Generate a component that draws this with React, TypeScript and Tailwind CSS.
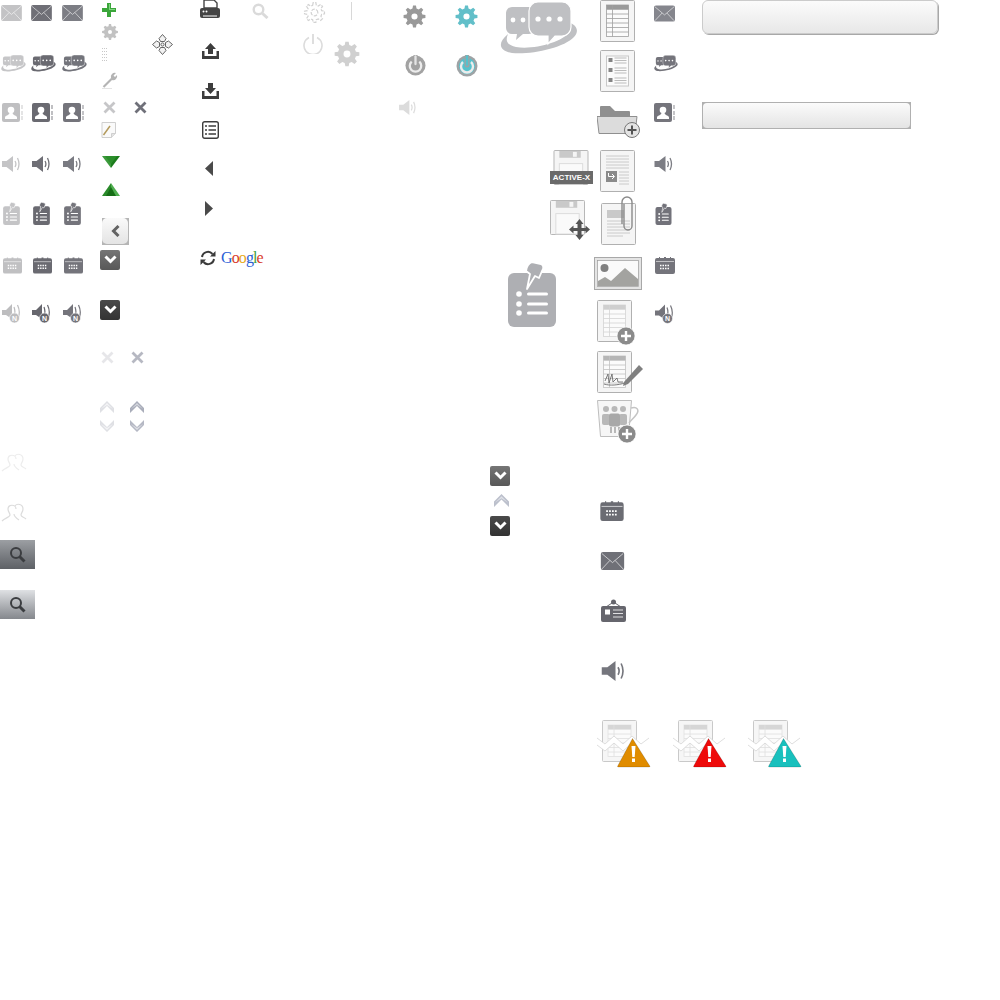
import React from 'react';

type IconProps = { className: string; color?: string; accent?: string };

// gear outline with a round hole, used by all the cog icons
const gearPath = (c: number, ro: number, ri: number, hole: number, teeth = 8) => {
  let d = '';
  const step = (Math.PI * 2) / teeth;
  for (let i = 0; i < teeth; i++) {
    const a = i * step - Math.PI / 2;
    const pts: [number, number][] = [
      [ri, a - step * 0.32],
      [ro, a - step * 0.17],
      [ro, a + step * 0.17],
      [ri, a + step * 0.32],
    ];
    pts.forEach(([r, t], j) => {
      const x = (c + r * Math.cos(t)).toFixed(2);
      const y = (c + r * Math.sin(t)).toFixed(2);
      d += `${i === 0 && j === 0 ? 'M' : 'L'}${x} ${y} `;
    });
  }
  d += 'Z ';
  d += `M${c + hole} ${c} A${hole} ${hole} 0 1 0 ${c - hole} ${c} A${hole} ${hole} 0 1 0 ${c + hole} ${c} Z`;
  return d;
};

function Mail({ className, color = '#6e6e75' }: IconProps) {
  return (
    <svg className={className} viewBox="0 0 22 17">
      <rect width="22" height="17" rx="2" fill={color} />
      <path d="M1 1.5 11 10 21 1.5M1 16l7.5-8M21 16l-7.5-8" fill="none" stroke="#fff" strokeOpacity=".65" strokeWidth=".9" />
    </svg>
  );
}

function Chat({ className, color = '#6e6e75' }: IconProps) {
  return (
    <svg className={className} viewBox="0 0 78 53">
      <path d="M68 20C78 23 79 30 74 35 64 46 30 53 12 51-1 49-3 41 8 32 5 39 7 43 16 45 34 48 62 40 70 30Z" fill={color} />
      <path d="M12 5h17a6 6 0 0 1 6 6v15a6 6 0 0 1-6 6H23l-7 6 1-6h-5a6 6 0 0 1-6-6V11a6 6 0 0 1 6-6Z" fill={color} />
      <path d="M38 0h24a9 9 0 0 1 9 9v16a9 9 0 0 1-9 9h-7l-7 8 0-8H38a9 9 0 0 1-9-9V9a9 9 0 0 1 9-9Z" fill={color} stroke="#fff" strokeWidth="1.2" />
      <g fill="#fff">
        <circle cx="13" cy="18" r="2.4" />
        <circle cx="23" cy="18" r="2.4" />
        <circle cx="38" cy="17" r="2.6" />
        <circle cx="49" cy="17" r="2.6" />
        <circle cx="60" cy="17" r="2.6" />
      </g>
    </svg>
  );
}

function Contact({ className, color = '#6e6e75' }: IconProps) {
  return (
    <svg className={className} viewBox="0 0 21 19">
      <rect width="18" height="19" rx="2" fill={color} />
      <circle cx="9" cy="7" r="3.3" fill="#fff" />
      <path d="M3 16v-1.5C3 12.5 7 12.5 7.5 10h3c.5 2.5 4.5 2.5 4.5 4.5V16Z" fill="#fff" />
      <path d="M20 2v4M20 8v4M20 13v4" stroke={color} strokeOpacity=".7" strokeWidth="1.2" />
    </svg>
  );
}

function Speaker({ className, color = '#6e6e75' }: IconProps) {
  return (
    <svg className={className} viewBox="0 0 18 16">
      <path d="M0 5h4.5L11 0v16L4.5 11H0Z" fill={color} />
      <path d="M13 5q1.8 3 0 6M15.5 2q3 6 0 12" fill="none" stroke={color} strokeWidth="1.3" />
    </svg>
  );
}

function SpeakerN({ className, color = '#6e6e75' }: IconProps) {
  return (
    <svg className={className} viewBox="0 0 19 19">
      <path d="M0 6h4L10 0v15L4 11H0Z" fill={color} />
      <path d="M12 3q1.5 4 .5 7M15.5 1q3 6 1 12" fill="none" stroke={color} strokeWidth="1.2" />
      <circle cx="12.5" cy="14" r="5" fill={color} stroke="#fff" strokeWidth=".6" />
      <text x="12.5" y="16.6" textAnchor="middle" fontSize="7" fontWeight="700" fontFamily="Liberation Sans, sans-serif" fill="#fff">
        N
      </text>
    </svg>
  );
}

function Clipboard({ className, color = '#6e6e75' }: IconProps) {
  return (
    <svg className={className} viewBox="0 0 48 66">
      <rect y="12" width="48" height="54" rx="6" fill={color} />
      <path d="M24 1 33 3Q37 5 34 10L31 17 27 15 19 28 22 13 18 10Q19 3 24 1Z" fill={color} stroke="#fff" strokeWidth="1.8" strokeLinejoin="round" />
      <g fill="#fff">
        <circle cx="11" cy="33" r="2.8" />
        <circle cx="11" cy="43" r="2.8" />
        <circle cx="11" cy="52" r="2.8" />
        <rect x="19" y="31.5" width="21" height="3" rx="1.5" />
        <rect x="19" y="41.5" width="21" height="3" rx="1.5" />
        <rect x="19" y="50.5" width="21" height="3" rx="1.5" />
      </g>
    </svg>
  );
}

function Calendar({ className, color = '#6e6e75' }: IconProps) {
  return (
    <svg className={className} viewBox="0 0 20 18">
      <path d="M4 1h1v1h4V1h2v1h4V1h1v1h2a2 2 0 0 1 2 2v12a2 2 0 0 1-2 2H2a2 2 0 0 1-2-2V4a2 2 0 0 1 2-2h2Z" fill={color} />
      <path d="M1 5.5h18" stroke="#fff" strokeOpacity=".7" strokeWidth=".8" />
      <path d="M5 9.5h10M5 12.5h10" stroke="#fff" strokeWidth="1.6" strokeDasharray="1.5 1" />
    </svg>
  );
}

function Gear({ className, color = '#9b9b9b' }: IconProps) {
  return (
    <svg className={className} viewBox="0 0 24 24">
      <path d={gearPath(12, 11.5, 8.5, 3.2)} fill={color} fillRule="evenodd" />
    </svg>
  );
}

function Power({ className, color = '#a6a6a6', accent = '#a6a6a6' }: IconProps) {
  return (
    <svg className={className} viewBox="0 0 22 22">
      <circle cx="11" cy="11" r="10.5" fill={color} />
      <circle cx="11" cy="11" r="8" fill={accent} />
      <path d="M7 7a6 6 0 1 0 8 0" fill="none" stroke="#ececec" strokeWidth="2.4" />
      <path d="M11 2v8" stroke={color} strokeWidth="5" strokeLinecap="round" />
      <path d="M11 1.5v8" stroke={accent === color ? '#e4e4e4' : accent} strokeWidth="2.4" strokeLinecap="round" />
    </svg>
  );
}

function Cross({ className, color = '#c9c9cc' }: IconProps) {
  return (
    <svg className={className} viewBox="0 0 13 13">
      <path d="M1.5 1.5l10 10M11.5 1.5l-10 10" stroke={color} strokeWidth="2.8" />
    </svg>
  );
}

function ChevronPale({ className, color = '#dfe0e4', accent = '#f4f4f6' }: IconProps) {
  return (
    <svg className={className} viewBox="0 0 14 12">
      <path d="M7 0l7 7v5L7 5 0 12V7Z" fill={color} />
      <path d="M7 2l6 6-6-4-6 4Z" fill={accent} />
    </svg>
  );
}

function ChevronBox({ className }: { className: string }) {
  return (
    <div className={`flex h-5 w-5 items-center justify-center rounded-[2px] ${className}`}>
      <svg className="h-[10px] w-[13px]" viewBox="0 0 13 10">
        <path d="M1.5 1.5l5 5 5-5" fill="none" stroke="#fff" strokeWidth="3" />
      </svg>
    </div>
  );
}

function PlusBadge({ cx, cy, r = 9 }: { cx: number; cy: number; r?: number }) {
  return (
    <g>
      <circle cx={cx} cy={cy} r={r} fill="#8b8b8b" stroke="#fff" strokeWidth=".7" />
      <path d={`M${cx - 5} ${cy}h10M${cx} ${cy - 5}v10`} stroke="#fff" strokeWidth="2.4" />
    </g>
  );
}

// small spreadsheet drawn on the paper icons
function MiniTable({ x, y, w, rows, head = '#c4c4c4', line = '#d4d4d4' }: { x: number; y: number; w: number; rows: number; head?: string; line?: string }) {
  const h = rows * 4.5;
  return (
    <g>
      <rect x={x} y={y} width={w} height={h} fill="#fbfbfb" stroke={line} strokeWidth=".8" />
      <rect x={x} y={y} width={w} height="4" fill={head} />
      {Array.from({ length: rows - 1 }, (_, i) => (
        <path key={i} d={`M${x} ${y + 4.5 * (i + 1)}h${w}`} stroke={line} strokeWidth=".8" />
      ))}
      <path d={`M${x + 6} ${y}v${h}`} stroke={line} strokeWidth=".8" />
    </g>
  );
}

function Lines({ x, w, ys, color = '#c6c6c6', width = 0.9 }: { x: number; w: number; ys: number[]; color?: string; width?: number }) {
  return (
    <g>
      {ys.map((y) => (
        <path key={y} d={`M${x} ${y}h${w}`} stroke={color} strokeWidth={width} />
      ))}
    </g>
  );
}

function Paper({ w, h }: { w: number; h: number }) {
  return <rect x=".5" y=".5" width={w - 1} height={h - 1} rx="1" fill="#f5f5f5" stroke="#b0b0b0" />;
}

function Floppy({ className }: { className: string }) {
  return (
    <svg className={className} viewBox="0 0 36 36">
      <path d="M1.5.5h33a1 1 0 0 1 1 1v33a1 1 0 0 1-1 1h-33a1 1 0 0 1-1-1v-33a1 1 0 0 1 1-1Z" fill="#f5f5f5" stroke="#b5b5b5" />
      <rect x="6" y="1" width="22" height="7" fill="#c9c9c9" />
      <rect x="20" y="2" width="4" height="5" fill="#f5f5f5" />
      <rect x="6" y="14" width="24" height="21" fill="#fafafa" stroke="#dcdcdc" />
    </svg>
  );
}

function People({ stroke }: { stroke: string }) {
  return (
    <svg className="ml-[1px] h-[21px] w-[26px]" viewBox="0 0 26 21">
      <path d="M15 6C15 1 7 1 7 6 7 9 9 10 9 12 9 14 4 15 1 18M13 11C13 13 15 15 18 17" fill="none" stroke={stroke} strokeWidth="1.2" />
      <path d="M14 3C16 0 22 1 22 6 22 9 20 10 20 12 20 14 23 14 25 16" fill="none" stroke={stroke} strokeWidth="1.2" />
    </svg>
  );
}

function SearchButton({ className }: { className: string }) {
  return (
    <div className={`flex h-[29px] w-[35px] items-center justify-center bg-gradient-to-b ${className}`}>
      <svg className="h-[17px] w-[17px]" viewBox="0 0 17 17">
        <circle cx="7" cy="7" r="5" fill="none" stroke="#3b3d40" strokeWidth="2" />
        <path d="M10.5 10.5l5 5" stroke="#3b3d40" strokeWidth="3" />
      </svg>
    </div>
  );
}

function WarningDoc({ className, color }: { className: string; color: string }) {
  return (
    <svg className={className} viewBox="0 0 54 48">
      <rect x="5.5" y=".5" width="34" height="41" rx="1" fill="#f6f6f6" stroke="#c9c9c9" />
      <MiniTable x={11} y={5} w={23} rows={7} head="#d6d6d6" line="#e0e0e0" />
      <path d="M0 18l8 6 9-8 9 8 9-8 9 8 8-6v7l-8 6-9-8-9 8-9-8-9 8-8-6Z" fill="#fff" />
      <path d="M0 18l8 6 9-8 9 8 9-8 9 8 8-6M0 25l8 6 9-8 9 8 9-8" fill="none" stroke="#d5d5d5" strokeWidth=".8" />
      <path d="M35.5 18.5 52.8 46a.6.6 0 0 1-.5 1H21.200a.6.6 0 0 1-.5-1Z" fill={color} stroke="#00000030" strokeWidth=".8" />
      <path d="M34.5 26h4l-.8 11h-2.400Z" fill="#fff" />
      <rect x="35" y="38.5" width="3" height="3.5" fill="#fff" />
    </svg>
  );
}

// the three-state icons at the top left, one row per icon
const stateRows = [
  { Icon: Mail, cls: 'ml-[1px] h-[16px] w-[21px]', colors: ['#c3c3c5', '#6f6f76', '#7c7d84'] },
  { Icon: Chat, cls: 'ml-[1px] h-[17px] w-[25px]', colors: ['#c6c6c8', '#6a6a71', '#73747b'] },
  { Icon: Contact, cls: 'ml-[2px] h-[19px] w-[21px]', colors: ['#bfbfc1', '#6a6a71', '#74747b'] },
  { Icon: Speaker, cls: 'ml-[2px] h-[16px] w-[18px]', colors: ['#c4c4c6', '#6f6f76', '#7a7b82'] },
  { Icon: Clipboard, cls: 'ml-[3px] h-[23px] w-[17px]', colors: ['#c4c4c6', '#6a6a71', '#74747b'] },
  { Icon: Calendar, cls: 'ml-[3px] h-[18px] w-[19px]', colors: ['#c0c0c2', '#6a6a71', '#74747b'] },
  { Icon: SpeakerN, cls: 'ml-[2px] h-[19px] w-[19px]', colors: ['#bdbdbf', '#66666d', '#74747b'] },
];

export default function App() {
  return (
    <div className="relative h-[1000px] w-[1000px] overflow-hidden bg-white font-['Liberation_Sans',sans-serif]">
      {/* first sprite columns, three states per icon */}
      <div className="absolute left-0 top-[5px] grid grid-cols-[30px_31px_31px] grid-rows-[50px_48px_53px_46px_54px_48px_auto] items-start">
        {stateRows.map(({ Icon, cls, colors }) =>
          colors.map((c) => <Icon key={`${cls}${c}`} className={cls} color={c} />),
        )}
      </div>

      {/* small tool icons */}
      <div className="absolute left-[100px] top-[3px] grid grid-rows-[21px_24px_24px_29px_21px_34px_27px_35px_32px_50px_51px_50px_19px_auto] items-start">
        <svg className="ml-[2px] h-[14px] w-[14px]" viewBox="0 0 14 14">
          <path d="M5 0h4v5h5v4H9v5H5V9H0V5h5Z" fill="#3ba63b" />
          <path d="M6 1h2v5h5v1H7V1Z" fill="#7fd67f" />
        </svg>
        <svg className="ml-[2px] h-[16px] w-[16px]" viewBox="0 0 24 24">
          <path d={gearPath(12, 12, 9, 3)} fill="#c2c2c2" fillRule="evenodd" />
        </svg>
        <svg className="ml-[2px] h-[15px] w-[6px]" viewBox="0 0 6 15">
          {[0, 1, 2, 3, 4].map((r) =>
            [0, 2, 4].map((c) => <rect key={`${r}-${c}`} x={c} y={r * 3} width="1" height="1" fill="#c8c8c8" />),
          )}
        </svg>
        <svg className="ml-[2px] h-[17px] w-[16px]" viewBox="0 0 16 17">
          <path d="M1.5 15 10 6.5" stroke="#b4b4b4" strokeWidth="2.2" />
          <path d="M9 6a4 4 0 0 1 5-5l-2.500 2.500L13 5l2-2a4 4 0 0 1-5 5Z" fill="#b4b4b4" />
          <path d="M0 16.5h10" stroke="#e4e4e4" />
        </svg>
        <div className="flex">
          <Cross className="ml-[3px] h-[13px] w-[13px]" color="#c6c6c8" />
          <Cross className="ml-[18px] h-[13px] w-[13px]" color="#6f7079" />
        </div>
        <svg className="ml-[1px] h-[16px] w-[15px]" viewBox="0 0 15 16">
          <path d="M1 .5h13.5v11L10.5 15.500H1Z" fill="#fafafa" stroke="#cfcfcf" />
          <path d="M10.5 15.5v-4h4" fill="#e4e4e4" stroke="#cfcfcf" />
          <path d="M2.5 13 9 4" stroke="#b39a5c" strokeWidth="1.5" />
        </svg>
        <svg className="ml-[2px] h-[12px] w-[18px]" viewBox="0 0 18 12">
          <path d="M0 0h9v12Z" fill="#3c9a3c" />
          <path d="M18 0H9v12Z" fill="#1c7c1c" />
          <path d="M3 0h12l-6 8Z" fill="#2b8e2b" />
        </svg>
        <svg className="ml-[2px] h-[13px] w-[18px]" viewBox="0 0 18 13">
          <path d="M0 13h9V0Z" fill="#2a8a2a" />
          <path d="M18 13H9V0Z" fill="#4fae4f" />
          <path d="M4 13h10L9 4Z" fill="#166e16" />
        </svg>
        {/* back button and dark chevron boxes */}
        <div className="ml-[2px] h-[27px] w-[27px] bg-[#b5b5b5]">
          <div className="flex h-[26px] w-[26px] items-center justify-center rounded-[5px] bg-gradient-to-b from-[#fafafa] to-[#e4e4e4]">
            <svg className="h-[12px] w-[9px]" viewBox="0 0 9 12">
              <path d="M7.5 1 2.5 6l5 5" fill="none" stroke="#636363" strokeWidth="3" />
            </svg>
          </div>
        </div>
        <ChevronBox className="bg-gradient-to-b from-[#757575] to-[#585858]" />
        <ChevronBox className="bg-gradient-to-b from-[#4a4a4a] to-[#333333]" />
        <div className="flex gap-[17px] pl-[1px]">
          <Cross className="h-[13px] w-[13px]" color="#e6e6e9" />
          <Cross className="h-[13px] w-[13px]" color="#b6b8c2" />
        </div>
        <div className="flex gap-4">
          <ChevronPale className="h-[12px] w-[14px]" />
          <ChevronPale className="h-[12px] w-[14px]" color="#a9adba" accent="#d5d7de" />
        </div>
        <div className="flex gap-4">
          <ChevronPale className="h-[12px] w-[14px] rotate-180" />
          <ChevronPale className="h-[12px] w-[14px] rotate-180" color="#b5b8c4" accent="#dfe0e6" />
        </div>
      </div>

      {/* move cross */}
      <svg className="absolute left-[152px] top-[34px] h-[21px] w-[21px]" viewBox="0 0 21 21">
        <g fill="#f2f2f2" stroke="#555" strokeWidth=".9">
          <path d="M10.5.5l3.5 4-1.500 3h-4l-1.500-3Z" />
          <path d="M10.5 20.5l3.5-4-1.500-3h-4l-1.500 3Z" />
          <path d="M.5 10.5l4-3.500 3 1.500v4l-3 1.500Z" />
          <path d="M20.5 10.5l-4-3.500-3 1.500v4l3 1.500Z" />
          <circle cx="10.5" cy="10.5" r="1.6" />
        </g>
      </svg>

      {/* contact outlines and search buttons */}
      <div className="absolute left-0 top-[453px] grid grid-rows-[50px_37px_50px_auto] items-start">
        <People stroke="#ededed" />
        <People stroke="#dcdcdc" />
        <SearchButton className="from-[#9c9fa3] to-[#5e6166]" />
        <SearchButton className="from-[#dfe1e4] to-[#85888d]" />
      </div>

      {/* toolbar column */}
      <div className="absolute left-[200px] top-0 grid grid-rows-[43px_40px_38px_40px_40px_49px_auto] items-start">
        <svg className="h-[19px] w-[20px]" viewBox="0 0 20 19">
          <path d="M4 0h10l3 3v5H4Z" fill="#fff" stroke="#444" strokeWidth="1.4" />
          <path d="M2 8h16a2 2 0 0 1 2 2v6a2 2 0 0 1-2 2H2a2 2 0 0 1-2-2v-6a2 2 0 0 1 2-2Z" fill="#444" />
          <path d="M3 16h14" stroke="#fff" strokeWidth="1" />
          <circle cx="3.5" cy="11.5" r="1" fill="#fff" />
          <circle cx="6.5" cy="11.5" r="1" fill="#fff" />
        </svg>
        <svg className="ml-[2px] h-[16px] w-[17px]" viewBox="0 0 17 16">
          <path d="M8.5 0l5.5 6h-3v5H6V6H3Z" fill="#3d3d3d" />
          <path d="M0 8h2.5v5h12V8H17v8H0Z" fill="#3d3d3d" />
        </svg>
        <svg className="ml-[2px] h-[16px] w-[17px]" viewBox="0 0 17 16">
          <path d="M8.5 11 3 5h3V0h5v5h3Z" fill="#3d3d3d" />
          <path d="M0 8h2.5v5h12V8H17v8H0Z" fill="#3d3d3d" />
        </svg>
        <svg className="ml-[2px] h-[18px] w-[17px]" viewBox="0 0 17 18">
          <rect x=".7" y=".7" width="15.6" height="16.6" rx="2" fill="#fff" stroke="#3d3d3d" strokeWidth="1.4" />
          <path d="M3 5h2M3 9h2M3 13h2M6.5 5H14M6.5 9H14M6.5 13H14" stroke="#3d3d3d" strokeWidth="1.4" />
        </svg>
        <svg className="ml-[5px] h-[15px] w-[8px]" viewBox="0 0 8 15">
          <path d="M8 0v15L0 7.5Z" fill="#4a4a4a" />
        </svg>
        <svg className="ml-[5px] h-[15px] w-[8px]" viewBox="0 0 8 15">
          <path d="M0 0v15l8-7.5Z" fill="#4a4a4a" />
        </svg>
        <div className="flex items-start gap-[5px]">
          <svg className="h-[16px] w-[16px]" viewBox="0 0 16 16">
            <path d="M2 7a6 6 0 0 1 10.5-3M14 9a6 6 0 0 1-10.5 3" fill="none" stroke="#3a3a3a" strokeWidth="2" />
            <path d="M15.5 1v5.500H10ZM.5 15V9.500H6Z" fill="#3a3a3a" />
          </svg>
          <div className="-mt-px font-['Liberation_Serif',serif] text-[16px] leading-[17px] tracking-[-0.9px]">
            <span className="text-[#2a5fd6]">G</span>
            <span className="text-[#d93a2b]">o</span>
            <span className="text-[#e8a917]">o</span>
            <span className="text-[#2a5fd6]">g</span>
            <span className="text-[#3f9e3f]">l</span>
            <span className="text-[#d93a2b]">e</span>
          </div>
        </div>
      </div>

      <svg className="absolute left-[252px] top-[3px] h-[16px] w-[17px]" viewBox="0 0 17 16">
        <circle cx="6.5" cy="6.5" r="4.8" fill="none" stroke="#dadada" strokeWidth="2.4" />
        <path d="M10.5 10.5l5 4.5" stroke="#dadada" strokeWidth="3" />
      </svg>
      <svg className="absolute left-[303px] top-[2px] h-[21px] w-[23px]" viewBox="0 0 24 24">
        <path d={gearPath(12, 11.5, 8.5, 3.8)} fill="#fff" stroke="#d2d2d2" strokeWidth="1.4" strokeDasharray="4 1.5" fillRule="evenodd" />
      </svg>
      <div className="absolute left-[351px] top-[2px] h-[18px] w-px bg-[#d8d8d8]" />
      <svg className="absolute left-[303px] top-[33px] h-[21px] w-[20px]" viewBox="0 0 20 21">
        <path d="M6 4.5a9 9 0 1 0 8 0" fill="none" stroke="#dcdcdc" strokeWidth="1.6" />
        <path d="M10 1v10" fill="none" stroke="#c8c8c8" strokeWidth="1.2" />
      </svg>
      <Gear className="absolute left-[334px] top-[41px] h-[26px] w-[26px]" color="#d0d0d0" />

      {/* cog and power states */}
      <div className="absolute left-[399px] top-[5px] grid grid-cols-[52px_auto] grid-rows-[50px_45px_auto] items-start">
        <Gear className="ml-1 h-[23px] w-[23px]" color="#999999" />
        <Gear className="ml-1 h-[23px] w-[23px]" color="#62bfc9" />
        <Power className="ml-[6px] h-[21px] w-[21px]" color="#a2a2a2" accent="#a2a2a2" />
        <Power className="ml-[5px] h-[22px] w-[22px]" color="#9ea3a5" accent="#55c2cd" />
        <Speaker className="h-[15px] w-[17px]" color="#dcdcdc" />
      </div>
      <Chat className="absolute left-[500px] top-[2px] h-[53px] w-[78px]" color="#bfc0c3" />

      {/* floppy icons */}
      <div className="absolute left-[550px] top-[150px] flex w-[43px] flex-col">
        <div className="relative h-[50px]">
          <Floppy className="ml-[3px] h-[35px] w-[36px]" />
          <div className="absolute left-0 top-[21px] flex h-[13px] w-[43px] items-center justify-center bg-[#6a6a6a] text-[8px] font-bold leading-none text-white">
            ACTIVE-X
          </div>
        </div>
        <div className="relative">
          <Floppy className="h-[35px] w-[35px]" />
          <svg className="absolute left-[19px] top-[19px] h-[21px] w-[21px]" viewBox="0 0 21 21">
            <path d="M10.5 0l4 5H12.500v4h4V6.500l4.500 4-4.500 4V12h-4v4h2l-4 5-4-5h2v-4h-4v2.500L0 10.500l4.500-4V9h4V5h-2Z" fill="#555" />
          </svg>
        </div>
      </div>
      <Clipboard className="absolute left-[508px] top-[261px] h-[66px] w-[48px]" color="#aeafb3" />

      {/* document column */}
      <div className="absolute left-[594px] top-0 grid grid-rows-[50px_55px_45px_46px_61px_43px_51px_49px_auto] items-start">
        <svg className="ml-[6px] h-[42px] w-[35px]" viewBox="0 0 35 42">
          <Paper w={35} h={42} />
          <MiniTable x={6.5} y={5} w={22} rows={7} head="#9a9a9a" line="#9f9f9f" />
        </svg>
        <svg className="ml-[6px] h-[42px] w-[35px]" viewBox="0 0 35 42">
          <Paper w={35} h={42} />
          <rect x="6.5" y="6" width="22" height="30" fill="#fbfbfb" stroke="#c8c8c8" />
          <g fill="#858585">
            <rect x="8.5" y="8" width="4" height="4" />
            <rect x="8.5" y="18" width="4" height="4" />
            <rect x="8.5" y="28" width="4" height="4" />
          </g>
          <Lines x={14.5} w={12} ys={[8, 10.5, 13, 18, 20.5, 23, 28, 30.5, 33]} color="#a0a0a0" width={0.7} />
        </svg>
        <svg className="ml-[3px] h-[33px] w-[44px]" viewBox="0 0 44 33">
          <path d="M3 10V2a1 1 0 0 1 1-1h9l5 5h14a1 1 0 0 1 1 1v5H3Z" fill="#8f8f8f" />
          <path d="M0 11.5h40l-2 17H2Z" fill="#dcdcdc" stroke="#8f8f8f" />
          <circle cx="35" cy="25" r="7.5" fill="#e4e4e4" stroke="#777" />
          <path d="M30.5 25h9M35 20.5v9" stroke="#555" strokeWidth="2" />
        </svg>
        <svg className="ml-[6px] h-[42px] w-[35px]" viewBox="0 0 35 42">
          <Paper w={35} h={42} />
          <Lines x={6} w={23} ys={[6, 9, 12, 15, 18]} />
          <Lines x={19} w={10} ys={[22, 25, 28, 31, 34]} />
          <rect x="6" y="21" width="11" height="11" fill="#8a8a8a" />
          <path d="M8.5 23v3.5H14M12 24l2.500 2.500L12 29" fill="none" stroke="#fff" />
        </svg>
        <svg className="ml-[7px] h-[49px] w-[36px]" viewBox="0 0 36 49">
          <rect x=".5" y="7.5" width="34" height="41" rx="1" fill="#f5f5f5" stroke="#b0b0b0" />
          <rect x="6" y="14" width="17" height="8" fill="#c9c9c9" />
          <Lines x={6} w={23} ys={[25, 28, 31, 34, 37]} />
          <Lines x={6} w={16} ys={[40]} />
          <path d="M21 28V6a5 5 0 0 1 10 0v24a4 4 0 0 1-8 0V8" fill="none" stroke="#8a8a8a" strokeWidth="1.4" />
        </svg>
        <svg className="h-[34px] w-[48px]" viewBox="0 0 48 34">
          <rect x=".5" y=".5" width="47" height="32" fill="#e4e4e4" stroke="#a8a8a8" />
          <rect x="3.5" y="3.5" width="41" height="26" fill="#fafafa" stroke="#9c9c9c" strokeWidth=".7" />
          <circle cx="10.5" cy="11" r="4" fill="#808080" />
          <path d="M4 29V24l7-4 6 4 14-13 13 11v7Z" fill="#a3a3a0" />
        </svg>
        <svg className="ml-[3px] h-[45px] w-[39px]" viewBox="0 0 39 45">
          <Paper w={35} h={42} />
          <MiniTable x={6.5} y={5} w={22} rows={7} head="#cfcfcf" line="#d4d4d4" />
          <PlusBadge cx={29} cy={36} />
        </svg>
        <svg className="ml-[3px] h-[42px] w-[46px]" viewBox="0 0 46 42">
          <Paper w={35} h={42} />
          <MiniTable x={6.5} y={5} w={22} rows={7} head="#b5b5b5" line="#c2c2c2" />
          <path d="M8 30l3-7 1 9 3-9 1 8 4-4 1 4 5 0M7 33c6 2 14 1 21-1" fill="none" stroke="#6d6d6d" strokeWidth=".9" />
          <path d="M27 31 42 14l4 4-15 15-5 2Z" fill="#808080" />
        </svg>
        <svg className="ml-[3px] h-[44px] w-[44px]" viewBox="0 0 44 44">
          <path d="M.5.5h34l-3 36H3.5Z" fill="#f6f6f6" stroke="#bdbdbd" />
          <path d="M34 8c6-2 9 2 5 7-2 3-5 5-7 8" fill="none" stroke="#c4c4c4" strokeWidth="1.5" />
          <g fill="#b8b8b8">
            <circle cx="9" cy="9" r="3" />
            <circle cx="17.5" cy="9" r="3" />
            <circle cx="26" cy="9" r="3" />
            <rect x="5" y="14" width="8" height="11" rx="2" />
            <rect x="22" y="14" width="8" height="11" rx="2" />
            <rect x="12" y="13.5" width="11" height="13" rx="2" fill="#a8a8a8" />
            <rect x="13" y="27" width="2" height="6" />
            <rect x="17" y="27" width="2" height="6" />
            <rect x="21" y="27" width="2" height="6" />
          </g>
          <PlusBadge cx={30} cy={34} />
        </svg>
      </div>

      {/* hover copies next to the documents */}
      <div className="absolute left-[654px] top-[5px] grid grid-rows-[50px_48px_53px_47px_53px_48px_auto] items-start">
        <Mail className="h-[17px] w-[21px]" color="#85868d" />
        <Chat className="h-[17px] w-[24px]" color="#74747b" />
        <Contact className="h-[19px] w-[21px]" color="#75757c" />
        <Speaker className="h-[16px] w-[19px]" color="#7c7d84" />
        <Clipboard className="ml-[1px] h-[22px] w-[17px]" color="#72727a" />
        <Calendar className="ml-[1px] h-[18px] w-[20px]" color="#74747b" />
        <SpeakerN className="ml-[1px] h-[20px] w-[19px]" color="#74747b" />
      </div>

      {/* blank buttons */}
      <div className="absolute left-[702px] top-0 flex flex-col items-start gap-[68px]">
        <div className="h-[34px] w-[236px] rounded-[6px] border border-[#cbcbcb] bg-gradient-to-b from-[#fbfbfb] to-[#e8e8e8] shadow-[1px_1px_0_#a8a8a8]" />
        <div className="h-[27px] w-[209px] bg-[#b0b0b0] p-px">
          <div className="h-[25px] w-[207px] rounded-[4px] bg-gradient-to-b from-[#fbfbfb] to-[#e4e4e4]" />
        </div>
      </div>

      {/* dropdown chevrons */}
      <div className="absolute left-[490px] top-[466px] grid grid-rows-[28px_22px_auto] items-start">
        <ChevronBox className="bg-gradient-to-b from-[#757575] to-[#585858]" />
        <ChevronPale className="ml-1 h-[13px] w-[15px]" color="#bcc0cc" accent="#e0e2e8" />
        <ChevronBox className="bg-gradient-to-b from-[#4a4a4a] to-[#333333]" />
      </div>

      {/* large tab icons */}
      <div className="absolute left-[600px] top-[500px] grid grid-rows-[52px_47px_62px_auto] items-start">
        <Calendar className="h-[21px] w-[24px]" color="#6b6c73" />
        <Mail className="h-[18px] w-[25px]" color="#6f7077" />
        <svg className="ml-[1px] h-[23px] w-[25px]" viewBox="0 0 25 23">
          <circle cx="12.5" cy="3" r="2.5" fill="#66666d" />
          <path d="M5 8 12.5 3 20 8" fill="none" stroke="#66666d" />
          <rect y="7" width="25" height="16" rx="2" fill="#66666d" />
          <rect x="4" y="10.5" width="5" height="5" fill="#fff" />
          <path d="M12 11h10M12 14.5h10M12 18h10" stroke="#fff" strokeOpacity=".8" />
        </svg>
        <Speaker className="ml-[1px] h-[20px] w-[24px]" color="#75767d" />
      </div>

      {/* import warnings */}
      <div className="absolute left-[597px] top-[720px] grid grid-cols-[76px_75px_54px]">
        <WarningDoc className="h-[48px] w-[54px]" color="#e08c00" />
        <WarningDoc className="h-[48px] w-[54px]" color="#ee0a0a" />
        <WarningDoc className="h-[48px] w-[54px]" color="#19c0bd" />
      </div>
    </div>
  );
}
